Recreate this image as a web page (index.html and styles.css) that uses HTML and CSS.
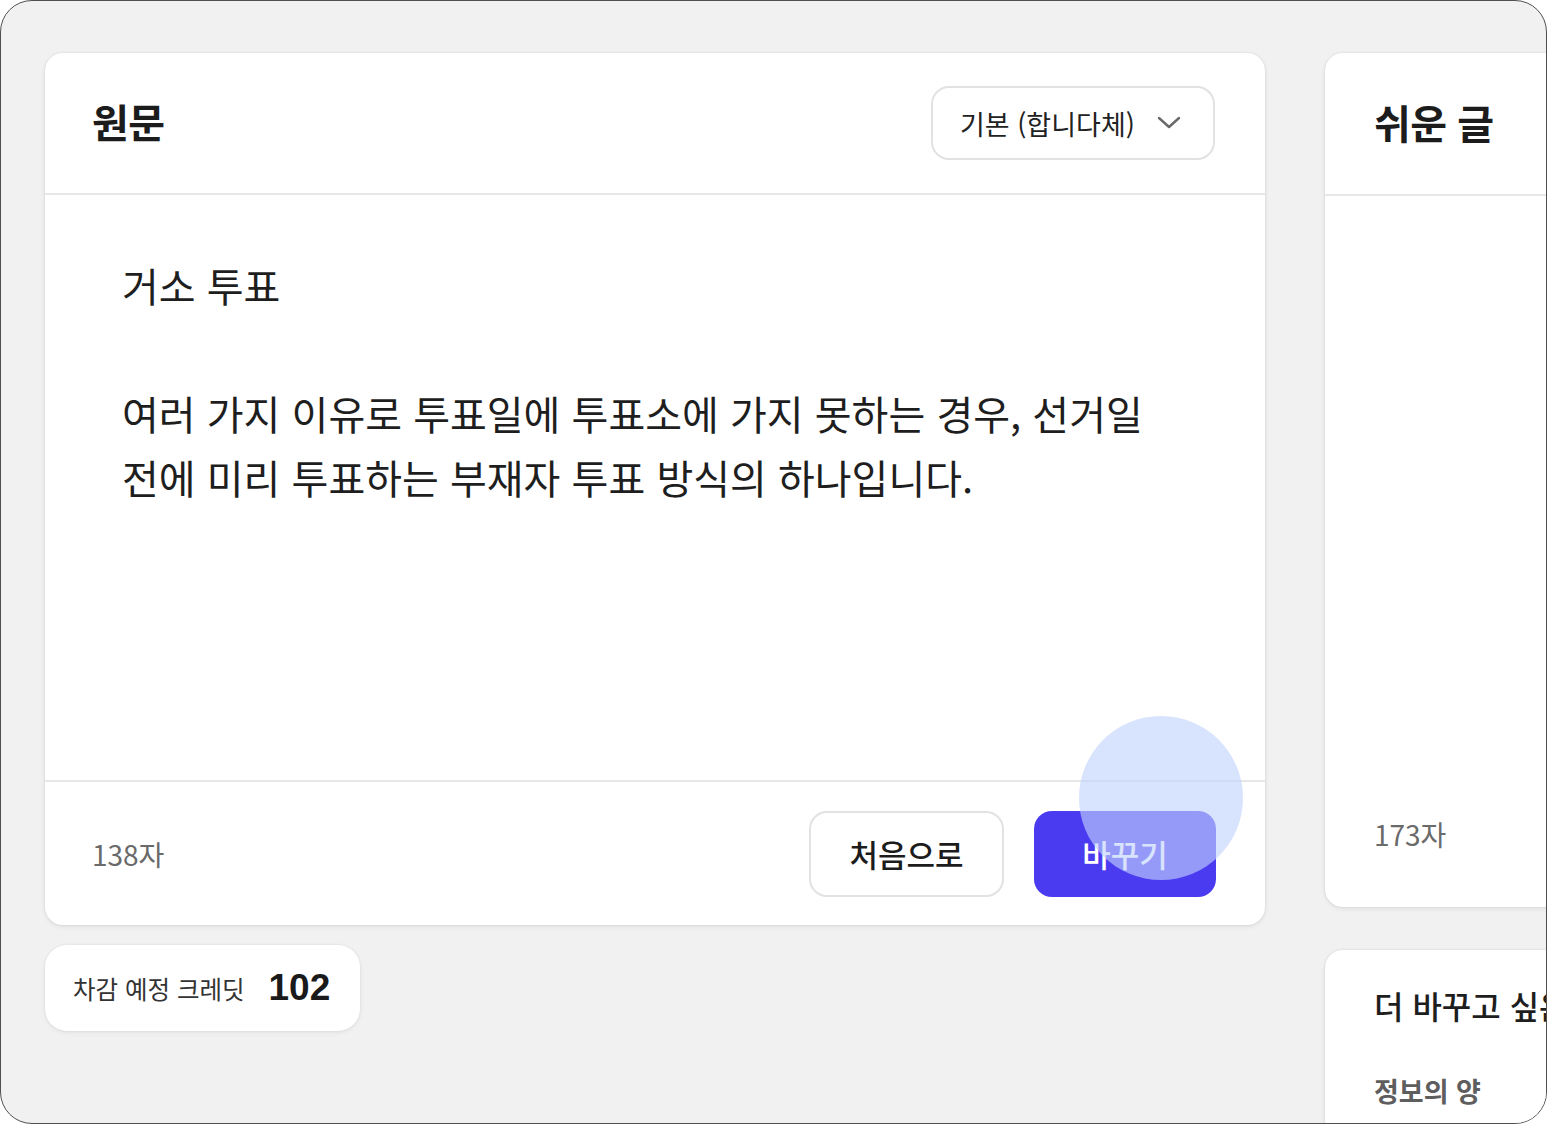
FILE: index.html
```html
<!DOCTYPE html>
<html lang="ko">
<head>
<meta charset="utf-8">
<title>쉬운 글 바꾸기</title>
<link rel="stylesheet" href="styles.css">
</head>
<body>
<div class="frame">
  <section class="column column-source">
    <div class="card source-card">
      <header class="card-head">
        <h2 class="card-title">원문</h2>
        <button class="select" type="button">
          <span>기본 (합니다체)</span>
          <svg class="chevron" width="24" height="14" viewBox="0 0 24 14" aria-hidden="true">
            <path d="M2 2 L12 11 L22 2" fill="none" stroke="#6a6a6a" stroke-width="2.4" stroke-linecap="round" stroke-linejoin="round"/>
          </svg>
        </button>
      </header>
      <div class="card-body">
        <p class="source-text">거소 투표<br><br>여러 가지 이유로 투표일에 투표소에 가지 못하는 경우, 선거일 전에 미리 투표하는 부재자 투표 방식의 하나입니다.</p>
      </div>
      <footer class="card-foot">
        <span class="count">138자</span>
        <div class="actions">
          <button class="btn btn-ghost" type="button">처음으로</button>
          <button class="btn btn-primary" type="button">바꾸기</button>
        </div>
      </footer>
      <span class="touch-ripple"></span>
    </div>
    <div class="credit">
      <span class="credit-label">차감 예정 크레딧</span>
      <strong class="credit-value">102</strong>
    </div>
  </section>

  <section class="column column-result">
    <div class="card result-card">
      <header class="card-head">
        <h2 class="card-title">쉬운 글</h2>
      </header>
      <div class="card-body"></div>
      <footer class="card-foot">
        <span class="count">173자</span>
      </footer>
    </div>
    <div class="card more-card">
      <p class="more-title">더 바꾸고 싶은 점이 있나요?</p>
      <p class="more-label">정보의 양</p>
    </div>
  </section>
</div>
</body>
</html>
```

FILE: styles.css
```css
* {
  box-sizing: border-box;
}

html,
body {
  margin: 0;
  padding: 0;
  background: #ffffff;
}

body {
  font-family: "Noto Sans CJK KR", "Noto Sans", sans-serif;
  color: #1e1e1e;
}

.frame {
  width: 1547px;
  height: 1124px;
  border: 1px solid #505050;
  border-radius: 32px;
  overflow: hidden;
  background: #f1f1f1;
  display: grid;
  grid-template-columns: 1220px 640px;
  column-gap: 60px;
  align-items: start;
  padding: 52px 0 0 44px;
}

.column {
  display: flex;
  flex-direction: column;
  align-items: flex-start;
}

.card {
  background: #ffffff;
  border-radius: 18px;
  box-shadow: 0 0 3px rgba(0, 0, 0, 0.10), 0 2px 5px rgba(0, 0, 0, 0.06);
  width: 100%;
}

.source-card {
  position: relative;
  height: 872px;
  display: flex;
  flex-direction: column;
}

.card-head {
  height: 142px;
  flex: none;
  display: flex;
  align-items: center;
  justify-content: space-between;
  padding: 0 50px 0 47px;
  border-bottom: 2px solid #e7e7e7;
}

.card-title {
  margin: 0 0 4px;
  font-size: 40px;
  font-weight: 700;
  color: #1c1c1c;
  letter-spacing: -0.5px;
}

.select {
  width: 284px;
  height: 74px;
  border: 2px solid #e2e2e2;
  border-radius: 18px;
  background: #ffffff;
  display: flex;
  align-items: center;
  gap: 22px;
  padding: 0 0 0 27px;
  font-family: inherit;
  font-size: 27px;
  color: #222222;
  cursor: pointer;
}

.chevron {
  flex: none;
}

.card-body {
  flex: 1;
  padding: 58px 60px 0 77px;
}

.source-text {
  margin: 0;
  font-size: 40px;
  line-height: 64px;
  color: #1e1e1e;
  word-break: keep-all;
}

.card-foot {
  height: 145px;
  flex: none;
  display: flex;
  align-items: center;
  justify-content: space-between;
  padding: 0 49px 0 47px;
  border-top: 2px solid #e7e7e7;
}

.count {
  font-size: 28px;
  color: #6a6a6a;
}

.actions {
  display: flex;
  gap: 30px;
}

.btn {
  height: 86px;
  border-radius: 18px;
  font-family: inherit;
  font-size: 31px;
  font-weight: 500;
  cursor: pointer;
}

.btn-ghost {
  width: 195px;
  background: #ffffff;
  border: 2px solid #e2e2e2;
  color: #1c1c1c;
}

.btn-primary {
  width: 182px;
  background: #4b3bf0;
  border: none;
  color: #ffffff;
}

/* press feedback drawn over the primary button */
.touch-ripple {
  position: absolute;
  left: 1034px;
  top: 663px;
  width: 164px;
  height: 164px;
  border-radius: 50%;
  background: rgba(193, 211, 252, 0.63);
  pointer-events: none;
}

.credit {
  margin-top: 20px;
  height: 86px;
  background: #ffffff;
  border-radius: 22px;
  box-shadow: 0 0 3px rgba(0, 0, 0, 0.08), 0 2px 5px rgba(0, 0, 0, 0.05);
  display: flex;
  align-items: center;
  gap: 24px;
  padding: 0 30px 0 28px;
}

.credit-label {
  font-size: 24.5px;
  color: #333333;
}

.credit-value {
  font-size: 37px;
  font-weight: 700;
  color: #1a1a1a;
  font-family: "Liberation Sans", "Noto Sans CJK KR", sans-serif;
}

.result-card {
  height: 854px;
  display: flex;
  flex-direction: column;
}

.result-card .card-head {
  height: 143px;
  padding-left: 49px;
}

.result-card .card-foot {
  padding-left: 49px;
  border-top: none;
  height: 147px;
}

.more-card {
  margin-top: 43px;
  height: 300px;
  padding: 30px 0 0 49px;
}

.more-title {
  margin: 0;
  font-size: 32px;
  font-weight: 500;
  color: #1e1e1e;
  line-height: 50px;
  white-space: nowrap;
}

.more-label {
  margin: 41px 0 0;
  font-size: 27px;
  font-weight: 700;
  color: #5e5e5e;
}
```
